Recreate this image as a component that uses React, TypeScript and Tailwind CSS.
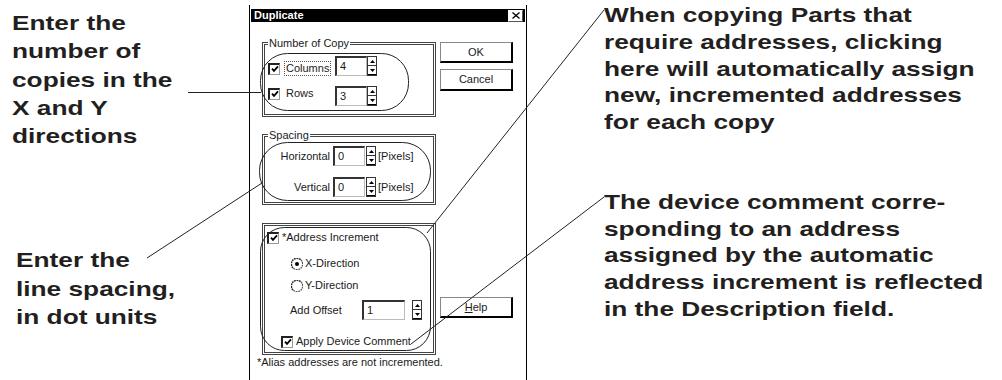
import React from "react";

function Check() {
  return (
    <svg width="8" height="8" viewBox="0 0 8 8">
      <path d="M1 3.6 L3 5.8 L7 1.4" fill="none" stroke="#000" strokeWidth="1.8" />
    </svg>
  );
}

function Checkbox() {
  return (
    <span className="flex h-[12px] w-[12px] shrink-0 items-center justify-center border-b border-l-2 border-r border-t-2 border-b-[#999] border-l-[#222] border-r-[#999] border-t-[#222] bg-white">
      <Check />
    </span>
  );
}

function Radio({ on }: { on?: boolean }) {
  return (
    <svg width="12" height="12" viewBox="0 0 12 12" className="shrink-0">
      <path d="M2 10 A5 5 0 0 1 10 2" fill="none" stroke="#222" strokeWidth="1.5" strokeDasharray="1.8 0.7" />
      <path d="M10 2 A5 5 0 0 1 2 10" fill="none" stroke="#555" strokeWidth="1.2" strokeDasharray="1.8 0.7" />
      {on && <circle cx="6" cy="6" r="2" fill="#000" />}
    </svg>
  );
}

function Spin() {
  return (
    <div className="flex h-[20px] w-[10px] shrink-0 flex-col border border-[#333] bg-white">
      <div className="flex flex-1 items-center justify-center border-b border-[#333]">
        <svg width="5" height="3" viewBox="0 0 5 3">
          <path d="M0 3 L2.5 0 L5 3Z" fill="#000" />
        </svg>
      </div>
      <div className="flex flex-1 items-center justify-center border-b border-black">
        <svg width="5" height="3" viewBox="0 0 5 3">
          <path d="M0 0 L2.5 3 L5 0Z" fill="#000" />
        </svg>
      </div>
    </div>
  );
}

function Field({ value, w }: { value: string; w: string }) {
  return (
    <div
      className={`flex h-[20px] shrink-0 items-center border-b border-l-2 border-r border-t-2 border-b-[#bbb] border-l-[#333] border-r-[#bbb] border-t-[#333] bg-white pl-[3px] ${w}`}
    >
      {value}
    </div>
  );
}

function Btn({ children, tall }: { children: React.ReactNode; tall?: boolean }) {
  return (
    <div
      className={`flex w-[73px] items-center justify-center border-b-2 border-l border-r-2 border-t border-b-black border-l-[#888] border-r-black border-t-[#888] bg-white ${
        tall ? "h-[22px]" : "h-[21px]"
      }`}
    >
      {children}
    </div>
  );
}

function CloseBox() {
  return (
    <div className="flex h-[12px] w-[15px] items-center justify-center border-b border-l border-r border-t border-b-[#555] border-l-white border-r-[#555] border-t-white bg-white">
      <svg width="8" height="7" viewBox="0 0 8 7">
        <path d="M0.5 0.5 L7.5 6.5 M7.5 0.5 L0.5 6.5" stroke="#000" strokeWidth="1.3" />
      </svg>
    </div>
  );
}

function Dialog() {
  return (
    <div className="mt-[5px] flex h-[375px] w-[278px] shrink-0 flex-col border-x border-black bg-white text-[11px] leading-[13px] text-[#1a1a1a]">
      <div className="mx-[1px] mt-[4px] flex h-[13px] items-center justify-between bg-black pl-[3px] pr-[2px]">
        <span className="font-bold text-white">Duplicate</span>
        <CloseBox />
      </div>

      <div className="flex gap-[4px] pl-[12px] pt-[20px]">
        <div className="w-[174px] shrink-0">
          {/* Number of Copy */}
          <div className="h-[75px] border-[3px] border-double border-[#444]">
            <div className="-mt-[8px] ml-[3px] w-fit bg-white px-[1px]">Number of Copy</div>
            <div className="mt-[6px] flex h-[20px] items-start">
              <div className="flex w-[70px] items-center pl-[3px] pt-[5px]">
                <Checkbox />
                <span className="ml-[4px] border border-dotted border-[#555] px-[1px]">Columns</span>
              </div>
              <Field value="4" w="w-[32px]" />
              <Spin />
            </div>
            <div className="mt-[10px] flex h-[20px] items-start">
              <div className="flex w-[70px] items-center pl-[3px] pt-[1px]">
                <Checkbox />
                <span className="ml-[6px]">Rows</span>
              </div>
              <Field value="3" w="w-[32px]" />
              <Spin />
            </div>
          </div>

          {/* Spacing */}
          <div className="mt-[17px] h-[71px] border-[3px] border-double border-[#444]">
            <div className="-mt-[8px] ml-[3px] w-fit bg-white px-[1px]">Spacing</div>
            <div className="mt-[4px] flex h-[20px] items-center">
              <div className="w-[68px] pr-[3px] text-right">Horizontal</div>
              <Field value="0" w="w-[32px]" />
              <div className="ml-[1px]">
                <Spin />
              </div>
              <span className="ml-[2px]">[Pixels]</span>
            </div>
            <div className="mt-[11px] flex h-[20px] items-center">
              <div className="w-[68px] pr-[3px] text-right">Vertical</div>
              <Field value="0" w="w-[32px]" />
              <div className="ml-[1px]">
                <Spin />
              </div>
              <span className="ml-[2px]">[Pixels]</span>
            </div>
          </div>

          {/* Address Increment */}
          <div className="mt-[18px] h-[132px] border-[3px] border-double border-[#444]">
            <div className="ml-[2px] mt-[5px] flex h-[13px] items-center gap-[3px]">
              <Checkbox />
              <span>*Address Increment</span>
            </div>
            <div className="ml-[26px] mt-[13px] flex h-[13px] items-center gap-[2px]">
              <Radio on />
              <span>X-Direction</span>
            </div>
            <div className="ml-[26px] mt-[9px] flex h-[13px] items-center gap-[2px]">
              <Radio />
              <span>Y-Direction</span>
            </div>
            <div className="mt-[8px] flex h-[20px] items-center">
              <div className="w-[97px] pl-[25px]">Add Offset</div>
              <Field value="1" w="w-[43px]" />
              <div className="ml-[7px]">
                <Spin />
              </div>
            </div>
            <div className="ml-[16px] mt-[15px] flex h-[13px] items-center gap-[3px]">
              <Checkbox />
              <span>Apply Device Comment</span>
            </div>
          </div>
        </div>

        <div className="flex w-[73px] flex-col">
          <Btn>OK</Btn>
          <div className="mt-[6px]">
            <Btn tall>Cancel</Btn>
          </div>
          <div className="mt-[206px]">
            <Btn>
              <span>
                <span className="underline">H</span>elp
              </span>
            </Btn>
          </div>
        </div>
      </div>

      <div className="pl-[7px] pt-[1px]">*Alias addresses are not incremented.</div>
    </div>
  );
}

function Note({ lines, cls }: { lines: string[]; cls: string }) {
  return (
    <div className={`origin-left scale-x-[1.25] whitespace-nowrap ${cls}`}>
      {lines.map((l) => (
        <div key={l}>{l}</div>
      ))}
    </div>
  );
}

export default function App() {
  return (
    <div className="relative flex h-[380px] w-[1002px] overflow-hidden bg-white font-['Liberation_Sans',Arial,sans-serif]">
      <div className="w-[249px] shrink-0 text-[21px] font-bold text-[#231f20]">
        <Note
          cls="ml-[12px] mt-[9px] leading-[28.3px]"
          lines={["Enter the", "number of", "copies in the", "X and Y", "directions"]}
        />
        <Note
          cls="ml-[16px] mt-[96px] leading-[28.5px]"
          lines={["Enter the", "line spacing,", "in dot units"]}
        />
      </div>

      <Dialog />

      <div className="pl-[77px] text-[21px] font-bold text-[#231f20]">
        <Note
          cls="mt-[2px] leading-[26.75px]"
          lines={[
            "When copying Parts that",
            "require addresses, clicking",
            "here will automatically assign",
            "new, incremented addresses",
            "for each copy",
          ]}
        />
        <Note
          cls="mt-[53px] leading-[26.75px]"
          lines={[
            "The device comment corre-",
            "sponding to an address",
            "assigned by the automatic",
            "address increment is reflected",
            "in the Description field.",
          ]}
        />
      </div>

      {/* callout lines and rings drawn over the dialog */}
      <svg className="pointer-events-none absolute inset-0" width="1002" height="380" viewBox="0 0 1002 380">
        <g fill="none" stroke="#222" strokeWidth="1">
          <line x1="188" y1="92.5" x2="261" y2="92.5" />
          <line x1="147" y1="258" x2="262" y2="183" />
          <line x1="604" y1="10" x2="427" y2="233" />
          <line x1="604" y1="197" x2="411" y2="344" />
          <rect x="260.5" y="53.5" width="148" height="57" rx="27" />
          <rect x="259.5" y="142.5" width="171" height="58" rx="28" />
          <rect x="260.5" y="227.5" width="170" height="123" rx="24" />
        </g>
      </svg>
    </div>
  );
}
